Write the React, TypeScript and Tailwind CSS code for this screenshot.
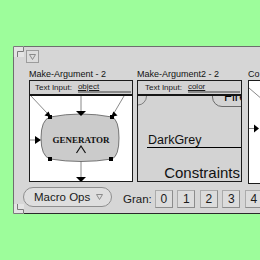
const sans = { fontFamily: '"Liberation Sans", Arial, sans-serif' };

function TextInputBar({ value, pad }: { value: string; pad: string }) {
  return (
    <div className={`flex h-[15px] items-end border-b-2 border-[#151515] bg-[#d3d3d3] pr-[1px] ${pad}`}>
      <span className="mb-[2px] shrink-0 text-[8px] leading-[8px] text-[#1a1a1a]">Text Input:</span>
      <div className="mb-[1px] ml-[6px] flex-1 border-b-2 border-[#8a8a8a]">
        <span className="block text-[8px] leading-[8px] text-[#1a1a1a] underline underline-offset-1">
          {value}
        </span>
      </div>
    </div>
  );
}

function GeneratorCanvas() {
  return (
    <svg width="102" height="85" viewBox="0 0 102 85" className="block bg-white">
      <g stroke="#6a6a6a" strokeWidth="0.8" fill="none">
        <path d="M1 0 L17 17" />
        <path d="M51 0 V15" />
        <path d="M94 0 L84 17" />
        <path d="M0 44 H6" />
        <path d="M51 65 V82" />
      </g>
      <path
        d="M20 21 Q51 15 82 21 Q89 24 89 42 Q89 60 82 63 Q51 68 20 63 Q11 60 11 42 Q11 24 20 21 Z"
        fill="#cbcbcb"
        stroke="#5a5a5a"
        strokeWidth="0.8"
      />
      <g fill="#000">
        <polygon points="46,15 56,15 51,20" />
        <polygon points="5,40 5,48 11,44" />
        <polygon points="46,81 56,81 51,86" />
        <polygon points="14.5,19.5 18.5,15.5 21,21" />
        <polygon points="87.5,19.5 83.5,15.5 81,21" />
        <rect x="18" y="19" width="4" height="4" />
        <rect x="80" y="19" width="4" height="4" />
        <rect x="18" y="61" width="4" height="4" />
        <rect x="79" y="61" width="4" height="4" />
      </g>
      <text
        x="51"
        y="47"
        textAnchor="middle"
        fontFamily='"Liberation Serif", "Times New Roman", serif'
        fontWeight="bold"
        fontSize="9"
        fill="#111"
      >
        GENERATOR
      </text>
      <polyline points="46.5,57 51,50 55.5,57" fill="none" stroke="#111" strokeWidth="1.2" />
    </svg>
  );
}

function ConstraintCanvas() {
  return (
    <div className="relative h-[85px] overflow-hidden bg-[#d3d3d3]">
      <svg width="103" height="85" className="absolute left-0 top-0">
        <path d="M8.5 0 A8.5 9 0 0 1 0 9" fill="none" stroke="#6a6a6a" strokeWidth="0.8" />
      </svg>
      <div className="absolute left-[74px] top-[-20px] h-[31px] w-[40px] rounded-bl-[10px] border border-[#6a6a6a]">
        <span className="absolute left-[11px] top-[13px] text-[13px] leading-[13px] text-black">Fire</span>
      </div>
      <div className="absolute left-[9px] right-0 top-[38px] border-b border-black">
        <span className="block pl-[1px] text-[12.5px] leading-[13px] text-[#111]">DarkGrey</span>
      </div>
      <span className="absolute bottom-[1px] right-[1px] text-[15px] leading-[15px] text-[#111]">Constraints</span>
    </div>
  );
}

function ThirdCanvas() {
  return (
    <svg width="40" height="102" className="block bg-white">
      <g stroke="#6a6a6a" strokeWidth="0.8" fill="none">
        <path d="M0 7 L14 19" />
        <path d="M0 47.5 H5" />
      </g>
      <polygon points="5,43.5 5,51.5 10,47.5" fill="#000" />
    </svg>
  );
}

export default function App() {
  return (
    <div className="h-[260px] w-[260px] overflow-hidden bg-[#9dfd9b]" style={sans}>
      <div className="relative ml-[13px] mt-[46px] h-[168px] w-[290px] border-b border-l border-t border-b-[#2a2a2a] border-l-[#6e6e6e] border-t-[#6e6e6e] bg-[#d6d6d6]">
        <svg width="11" height="11" className="absolute left-[-1px] top-[-1px]">
          <rect x="0" y="0" width="11" height="11" fill="#e4e4e4" />
          <path d="M0.5 11 V0.5 H10.5 V5.5 H4.5 V11" fill="none" stroke="#7a7a7a" strokeWidth="1" />
        </svg>
        <svg width="11" height="10" className="absolute bottom-[-1px] left-[-1px]">
          <rect x="0" y="0" width="11" height="10" fill="#e4e4e4" />
          <path d="M0.5 0 V9.5 H10.5 V5.5 H4.5 V0" fill="none" stroke="#7a7a7a" strokeWidth="1" />
        </svg>

        <div className="ml-[12px] mt-[3px] flex h-[13px] w-[13px] items-center justify-center border border-[#9c9c9c] bg-[#dcdcdc]">
          <svg width="7" height="6">
            <polygon points="0.5,0.5 6.5,0.5 3.5,5.5" fill="none" stroke="#8a8a8a" strokeWidth="1" />
          </svg>
        </div>

        <div className="ml-[15px] mt-[6px] flex">
          <div className="flex w-[104px] shrink-0 flex-col">
            <span className="h-[11px] whitespace-nowrap text-[9px] leading-[11px] text-[#111]">Make-Argument - 2</span>
            <div className="border border-[#1c1c1c]">
              <TextInputBar value="object" pad="pl-[5px]" />
              <GeneratorCanvas />
            </div>
          </div>

          <div className="ml-[4px] flex w-[105px] shrink-0 flex-col">
            <span className="h-[11px] whitespace-nowrap text-[9px] leading-[11px] text-[#111]">Make-Argument2 - 2</span>
            <div className="border border-[#1c1c1c]">
              <TextInputBar value="color" pad="pl-[7px]" />
              <ConstraintCanvas />
            </div>
          </div>

          <div className="ml-[6px] flex w-[42px] shrink-0 flex-col">
            <span className="h-[11px] whitespace-nowrap text-[9px] leading-[11px] text-[#111]">Co</span>
            <div className="border border-[#1c1c1c]">
              <ThirdCanvas />
            </div>
          </div>
        </div>

        <div className="ml-[9px] mt-[3px] flex items-start">
          <div className="flex h-[20px] w-[89px] shrink-0 items-center rounded-full border border-[#8e8e8e] bg-[#dedede] pl-[10px]">
            <span className="text-[11.5px] leading-[14px] text-[#1a1a1a]">Macro Ops</span>
            <svg width="7" height="6" className="ml-[6px]">
              <polygon points="0.5,0.5 6.5,0.5 3.5,5.5" fill="none" stroke="#8a8a8a" strokeWidth="1" />
            </svg>
          </div>
          <div className="ml-[11px] mt-[3px] flex h-[18px] shrink-0 items-center">
            <span className="text-[11.5px] leading-[14px] text-[#1a1a1a]">Gran:</span>
            <div className="ml-[3px] flex gap-[4.5px]">
              {["0", "1", "2", "3", "4"].map((d) => (
                <div
                  key={d}
                  className="flex h-[18px] w-[18px] shrink-0 items-center justify-center border border-[#ababab] border-b-[#8c8c8c] border-r-[#8c8c8c] bg-[#dcdcdc] text-[12px] leading-[12px] text-[#1a1a1a]"
                >
                  {d}
                </div>
              ))}
            </div>
          </div>
        </div>
      </div>
    </div>
  );
}
